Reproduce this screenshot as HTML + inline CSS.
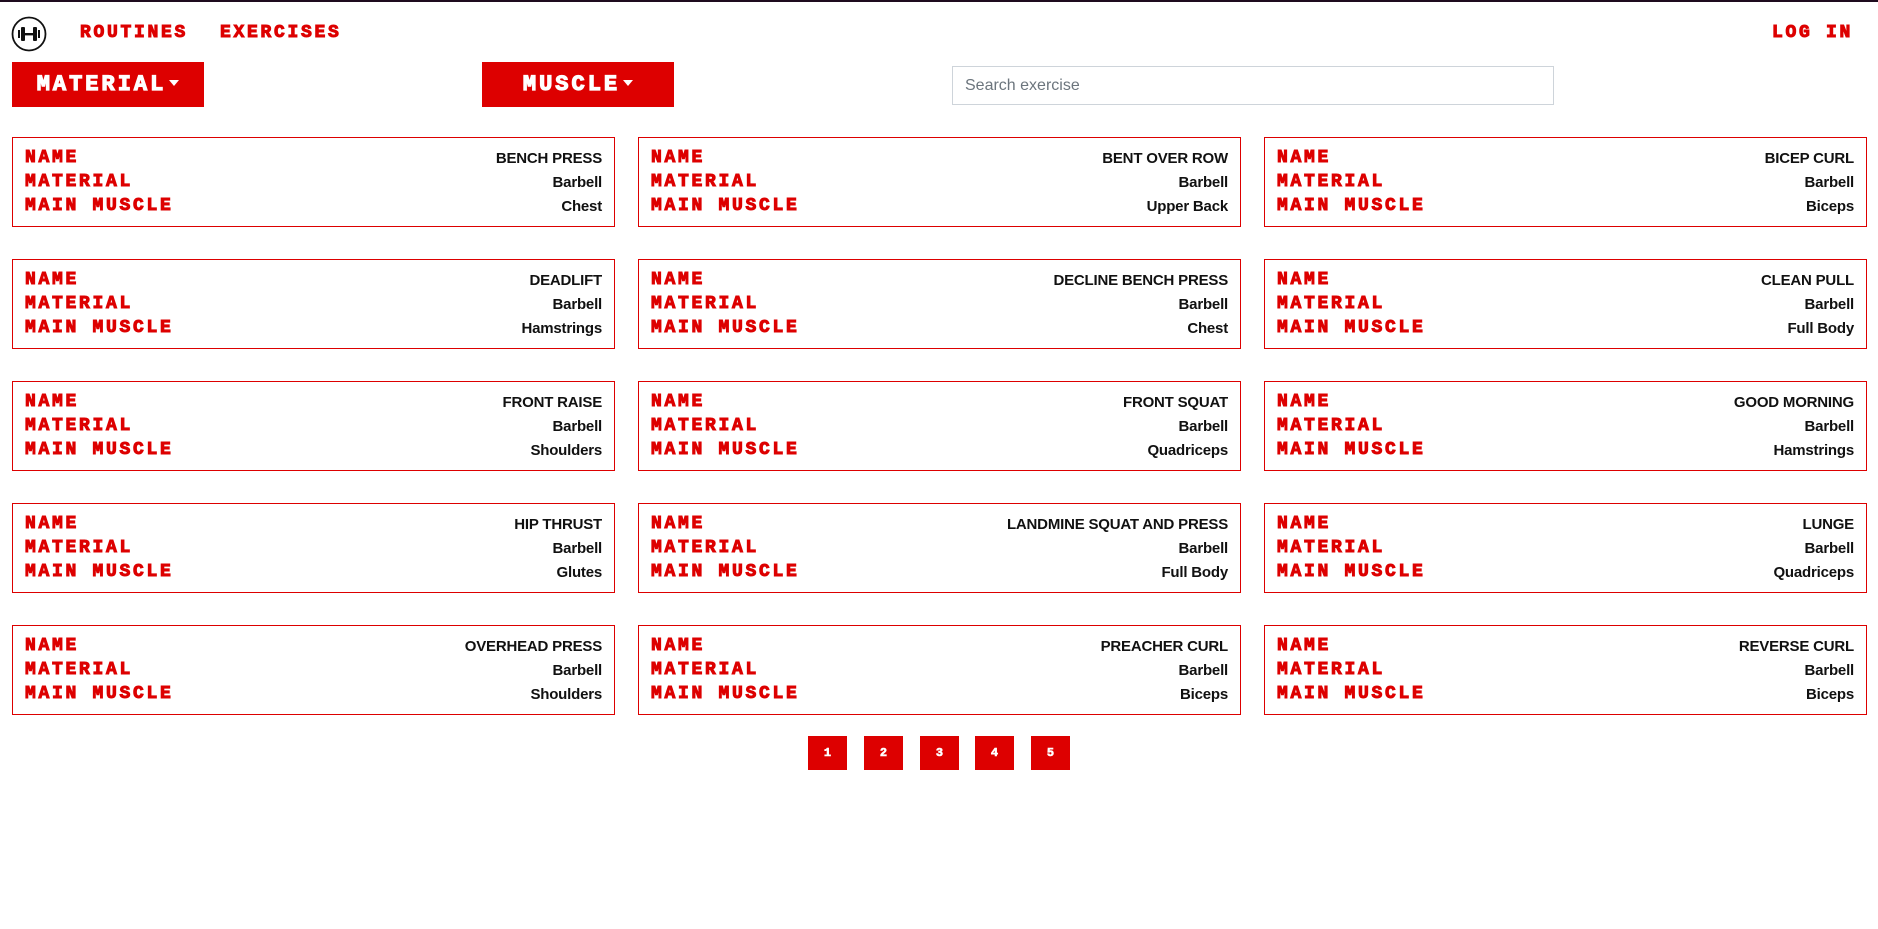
<!DOCTYPE html>
<html><head><meta charset="utf-8">
<style>
*{box-sizing:border-box;margin:0;padding:0}
html,body{width:1878px;height:929px;background:#fff;overflow:hidden}
body{border-top:2px solid #1e0b1e;position:relative;font-family:"Liberation Sans",sans-serif}
.mono{font-family:"Liberation Mono",monospace;font-weight:bold;color:#dd0000;text-transform:uppercase;-webkit-text-stroke:1px #dd0000}
.nav{position:absolute;top:22px;font-size:18px;letter-spacing:2.7px;line-height:18px}
.btn{position:absolute;top:60px;width:192px;height:45px;background:#dd0000;color:#fff;font-family:"Liberation Mono",monospace;font-weight:bold;font-size:22px;letter-spacing:3px;-webkit-text-stroke:1.2px #fff;display:flex;align-items:center;justify-content:center}
.btn .car{display:inline-block;width:0;height:0;border-left:5px solid transparent;border-right:5px solid transparent;border-top:6px solid #fff;margin-left:3px;margin-top:-4px;-webkit-text-stroke:0}
.search{position:absolute;left:952px;top:64px;width:602px;height:39px;border:1px solid #ced4da;font-size:16px;color:#6c757d;padding:10px 12px;font-family:"Liberation Sans",sans-serif}
.card{position:absolute;width:603px;height:90px;border:1px solid #dd0000;padding:8px 12px 0 12px}
.row{display:flex;justify-content:space-between;align-items:center;height:24px}
.lab{font-family:"Liberation Mono",monospace;font-weight:bold;color:#dd0000;font-size:18px;letter-spacing:2.7px;-webkit-text-stroke:1px #dd0000}
.val{font-size:15px;font-weight:bold;color:#111;letter-spacing:-0.2px}
.pg{position:absolute;top:734px;width:39px;height:34px;background:#dd0000;color:#fff;font-family:"Liberation Mono",monospace;font-weight:bold;font-size:12px;-webkit-text-stroke:0.6px #fff;display:flex;align-items:center;justify-content:center}
</style></head><body>
<svg style="position:absolute;left:11px;top:14px" width="36" height="36" viewBox="0 0 36 36">
<circle cx="18" cy="18" r="16.5" fill="none" stroke="#111" stroke-width="1.8"/>
<rect x="7" y="14" width="2" height="8" fill="#111"/>
<rect x="10" y="11" width="4" height="14" rx="1" fill="#111"/>
<rect x="14" y="17" width="8" height="2.4" fill="#111"/>
<rect x="22" y="11" width="4" height="14" rx="1" fill="#111"/>
<rect x="27" y="14" width="2" height="8" fill="#111"/>
</svg>
<div class="mono nav" style="left:80px">Routines</div>
<div class="mono nav" style="left:220px">Exercises</div>
<div class="mono nav" style="left:1772px">Log in</div>
<div class="btn" style="left:12px">MATERIAL<span class="car"></span></div>
<div class="btn" style="left:482px">MUSCLE<span class="car"></span></div>
<div class="search">Search exercise</div>

<div class="card" style="left:12px;top:135px"><div class="row"><span class="lab">NAME</span><span class="val">BENCH PRESS</span></div><div class="row"><span class="lab">MATERIAL</span><span class="val">Barbell</span></div><div class="row"><span class="lab">MAIN MUSCLE</span><span class="val">Chest</span></div></div>
<div class="card" style="left:638px;top:135px"><div class="row"><span class="lab">NAME</span><span class="val">BENT OVER ROW</span></div><div class="row"><span class="lab">MATERIAL</span><span class="val">Barbell</span></div><div class="row"><span class="lab">MAIN MUSCLE</span><span class="val">Upper Back</span></div></div>
<div class="card" style="left:1264px;top:135px"><div class="row"><span class="lab">NAME</span><span class="val">BICEP CURL</span></div><div class="row"><span class="lab">MATERIAL</span><span class="val">Barbell</span></div><div class="row"><span class="lab">MAIN MUSCLE</span><span class="val">Biceps</span></div></div>

<div class="card" style="left:12px;top:257px"><div class="row"><span class="lab">NAME</span><span class="val">DEADLIFT</span></div><div class="row"><span class="lab">MATERIAL</span><span class="val">Barbell</span></div><div class="row"><span class="lab">MAIN MUSCLE</span><span class="val">Hamstrings</span></div></div>
<div class="card" style="left:638px;top:257px"><div class="row"><span class="lab">NAME</span><span class="val">DECLINE BENCH PRESS</span></div><div class="row"><span class="lab">MATERIAL</span><span class="val">Barbell</span></div><div class="row"><span class="lab">MAIN MUSCLE</span><span class="val">Chest</span></div></div>
<div class="card" style="left:1264px;top:257px"><div class="row"><span class="lab">NAME</span><span class="val">CLEAN PULL</span></div><div class="row"><span class="lab">MATERIAL</span><span class="val">Barbell</span></div><div class="row"><span class="lab">MAIN MUSCLE</span><span class="val">Full Body</span></div></div>

<div class="card" style="left:12px;top:379px"><div class="row"><span class="lab">NAME</span><span class="val">FRONT RAISE</span></div><div class="row"><span class="lab">MATERIAL</span><span class="val">Barbell</span></div><div class="row"><span class="lab">MAIN MUSCLE</span><span class="val">Shoulders</span></div></div>
<div class="card" style="left:638px;top:379px"><div class="row"><span class="lab">NAME</span><span class="val">FRONT SQUAT</span></div><div class="row"><span class="lab">MATERIAL</span><span class="val">Barbell</span></div><div class="row"><span class="lab">MAIN MUSCLE</span><span class="val">Quadriceps</span></div></div>
<div class="card" style="left:1264px;top:379px"><div class="row"><span class="lab">NAME</span><span class="val">GOOD MORNING</span></div><div class="row"><span class="lab">MATERIAL</span><span class="val">Barbell</span></div><div class="row"><span class="lab">MAIN MUSCLE</span><span class="val">Hamstrings</span></div></div>

<div class="card" style="left:12px;top:501px"><div class="row"><span class="lab">NAME</span><span class="val">HIP THRUST</span></div><div class="row"><span class="lab">MATERIAL</span><span class="val">Barbell</span></div><div class="row"><span class="lab">MAIN MUSCLE</span><span class="val">Glutes</span></div></div>
<div class="card" style="left:638px;top:501px"><div class="row"><span class="lab">NAME</span><span class="val">LANDMINE SQUAT AND PRESS</span></div><div class="row"><span class="lab">MATERIAL</span><span class="val">Barbell</span></div><div class="row"><span class="lab">MAIN MUSCLE</span><span class="val">Full Body</span></div></div>
<div class="card" style="left:1264px;top:501px"><div class="row"><span class="lab">NAME</span><span class="val">LUNGE</span></div><div class="row"><span class="lab">MATERIAL</span><span class="val">Barbell</span></div><div class="row"><span class="lab">MAIN MUSCLE</span><span class="val">Quadriceps</span></div></div>

<div class="card" style="left:12px;top:623px"><div class="row"><span class="lab">NAME</span><span class="val">OVERHEAD PRESS</span></div><div class="row"><span class="lab">MATERIAL</span><span class="val">Barbell</span></div><div class="row"><span class="lab">MAIN MUSCLE</span><span class="val">Shoulders</span></div></div>
<div class="card" style="left:638px;top:623px"><div class="row"><span class="lab">NAME</span><span class="val">PREACHER CURL</span></div><div class="row"><span class="lab">MATERIAL</span><span class="val">Barbell</span></div><div class="row"><span class="lab">MAIN MUSCLE</span><span class="val">Biceps</span></div></div>
<div class="card" style="left:1264px;top:623px"><div class="row"><span class="lab">NAME</span><span class="val">REVERSE CURL</span></div><div class="row"><span class="lab">MATERIAL</span><span class="val">Barbell</span></div><div class="row"><span class="lab">MAIN MUSCLE</span><span class="val">Biceps</span></div></div>

<div class="pg" style="left:808px">1</div>
<div class="pg" style="left:864px">2</div>
<div class="pg" style="left:920px">3</div>
<div class="pg" style="left:975px">4</div>
<div class="pg" style="left:1031px">5</div>
</body></html>
